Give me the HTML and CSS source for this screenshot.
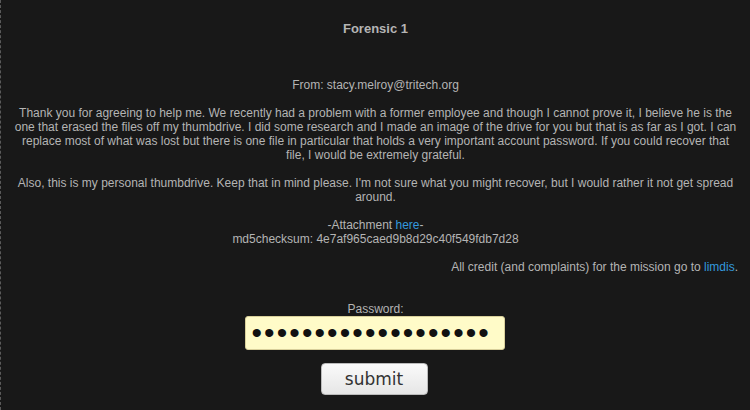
FILE: index.html
```html
<!DOCTYPE html>
<html>
<head>
<meta charset="utf-8">
<link rel="stylesheet" href="styles.css">
</head>
<body>
<div class="page">
  <h1 class="title">Forensic 1</h1>
  <div class="mission">
    <p class="line">From: stacy.melroy@tritech.org</p>
    <p class="para">Thank you for agreeing to help me. We recently had a problem with a former employee and though I cannot prove it, I believe he is the one that erased the files off my thumbdrive. I did some research and I made an image of the drive for you but that is as far as I got. I can replace most of what was lost but there is one file in particular that holds a very important account password. If you could recover that file, I would be extremely grateful.</p>
    <p class="para">Also, this is my personal thumbdrive. Keep that in mind please. I'm not sure what you might recover, but I would rather it not get spread around.</p>
    <p class="para">-Attachment <a href="#">here</a>-<br>md5checksum: 4e7af965caed9b8d29c40f549fdb7d28</p>
    <p class="credit">All credit (and complaints) for the mission go to <a href="#">limdis</a>.</p>
  </div>
  <form class="form">
    <label class="label" for="pw">Password:</label>
    <input class="pw" id="pw" type="password" value="xxxxxxxxxxxxxxxxxxx">
    <button class="submit" type="button">submit</button>
  </form>
</div>
</body>
</html>
```
FILE: styles.css
```css
html, body {
  margin: 0;
  padding: 0;
  background: #181818;
}
.page {
  border-left: 1px dashed #5a5a5a;
  min-height: 410px;
  box-sizing: border-box;
  padding: 0 12px 0 12px;
  font-family: "Liberation Sans", Arial, sans-serif;
  color: #b4b4b4;
  text-align: center;
}
.title {
  margin: 0;
  padding-top: 21px;
  font-size: 13px;
  line-height: 16px;
  font-weight: bold;
}
.mission {
  margin-top: 41px;
  font-size: 12px;
  line-height: 14px;
}
.mission p {
  margin: 0 0 14px 0;
}
a {
  color: #3399dd;
  text-decoration: none;
}
.credit {
  text-align: right;
}
.form {
  display: flex;
  flex-direction: column;
  align-items: center;
  margin-top: 28px;
}
.label {
  font-size: 12px;
  line-height: 14px;
}
.pw {
  margin-top: 0;
  margin-right: 2px;
  width: 260px;
  height: 34px;
  box-sizing: border-box;
  background: #fffbc8;
  border: 1px solid #d8cf9a;
  border-radius: 3px;
  padding: 0 6px;
  font-family: "Liberation Sans", sans-serif;
  font-size: 30px;
  color: #111;
  letter-spacing: 2.1px;
}
.submit {
  margin-top: 13px;
  margin-right: 3px;
  width: 107px;
  height: 32px;
  background: linear-gradient(#fafafa, #e6e6e6);
  border: 1px solid #bbb;
  border-radius: 4px;
  font-family: "DejaVu Sans", sans-serif;
  font-size: 17px;
  color: #333;
}
```
